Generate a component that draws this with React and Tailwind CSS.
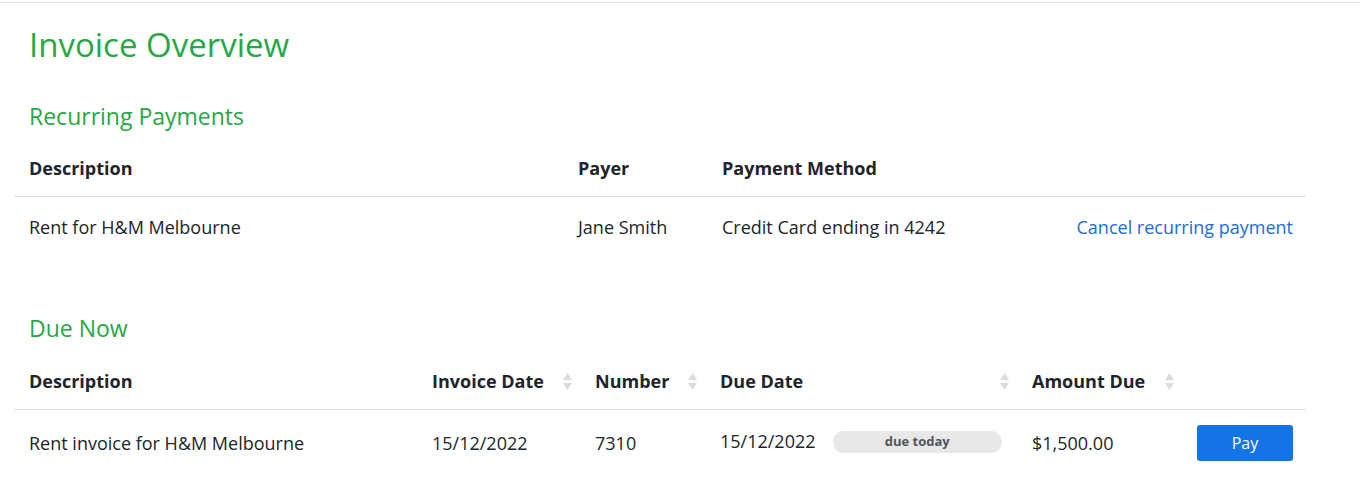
const recurring = [
  {
    description: "Rent for H&M Melbourne",
    payer: "Jane Smith",
    method: "Credit Card ending in 4242",
  },
];

const dueNow = [
  {
    description: "Rent invoice for H&M Melbourne",
    invoiceDate: "15/12/2022",
    number: "7310",
    dueDate: "15/12/2022",
    amount: "$1,500.00",
  },
];

function SortIcon() {
  return (
    <svg width="9" height="17" viewBox="0 0 9 17" className="shrink-0">
      <path d="M4.5 0 L9 7 L0 7 Z" fill="#dcdcdc" />
      <path d="M4.5 17 L9 10 L0 10 Z" fill="#dcdcdc" />
    </svg>
  );
}

function SortHeader({ label, className }) {
  return (
    <th className={`h-[54px] pl-[15px] pr-[8px] text-left font-bold align-middle ${className}`}>
      <div className="flex items-center justify-between">
        <span>{label}</span>
        <SortIcon />
      </div>
    </th>
  );
}

export default function App() {
  return (
    <div
      className="min-h-[492px] bg-white border-t border-[#e2e2e6] mt-[2px] px-[14px] text-[#212529] text-[18px]"
      style={{ fontFamily: '"Open Sans", "Noto Sans", sans-serif' }}
    >
      <h1 className="pl-[15px] pt-[22px] text-[33px] leading-[40px] text-[#28a745]">Invoice Overview</h1>

      {/* ---------- Recurring Payments ---------- */}
      <h2 className="pl-[15px] mt-[36px] text-[23px] leading-[30px] text-[#28a745]">Recurring Payments</h2>
      <table className="w-[1292px] mt-[10px] border-collapse table-fixed">
        <thead>
          <tr className="border-b border-[#dedede]">
            <th className="w-[549px] h-[55px] pl-[15px] text-left font-bold">Description</th>
            <th className="w-[144px] pl-[15px] text-left font-bold">Payer</th>
            <th className="w-[340px] pl-[15px] text-left font-bold">Payment Method</th>
            <th></th>
          </tr>
        </thead>
        <tbody>
          {recurring.map((r) => (
            <tr key={r.description}>
              <td className="h-[62px] pl-[15px]">{r.description}</td>
              <td className="pl-[15px]">{r.payer}</td>
              <td className="pl-[15px]">{r.method}</td>
              <td className="pr-[13px] text-right">
                <a href="#" className="text-[#1a6dd6]">Cancel recurring payment</a>
              </td>
            </tr>
          ))}
        </tbody>
      </table>

      {/* ---------- Due Now ---------- */}
      <h2 className="pl-[15px] mt-[55px] text-[23px] leading-[30px] text-[#28a745]">Due Now</h2>
      <table className="w-[1292px] mt-[12px] border-collapse table-fixed">
        <thead>
          <tr className="border-b border-[#dedede]">
            <th className="w-[403px] h-[54px] pl-[15px] text-left font-bold">Description</th>
            <SortHeader label="Invoice Date" className="w-[163px]" />
            <SortHeader label="Number" className="w-[125px]" />
            <SortHeader label="Due Date" className="w-[312px]" />
            <SortHeader label="Amount Due" className="w-[165px]" />
            <th></th>
          </tr>
        </thead>
        <tbody>
          {dueNow.map((r) => (
            <tr key={r.number}>
              <td className="h-[68px] pl-[15px]">{r.description}</td>
              <td className="pl-[15px]">{r.invoiceDate}</td>
              <td className="pl-[15px]">{r.number}</td>
              <td className="pl-[15px] pr-[15px]">
                <div className="flex items-center gap-[17px] -mt-[3px]">
                  <span>{r.dueDate}</span>
                  <span className="flex-1 h-[22px] rounded-full bg-[#e8e8e8] text-[13px] font-bold text-[#555] flex items-center justify-center">
                    due today
                  </span>
                </div>
              </td>
              <td className="pl-[15px]">{r.amount}</td>
              <td className="pr-[13px] text-right">
                <button className="w-[96px] h-[36px] rounded-[3px] bg-[#1473e6] text-white text-[16px]">Pay</button>
              </td>
            </tr>
          ))}
        </tbody>
      </table>
    </div>
  );
}
